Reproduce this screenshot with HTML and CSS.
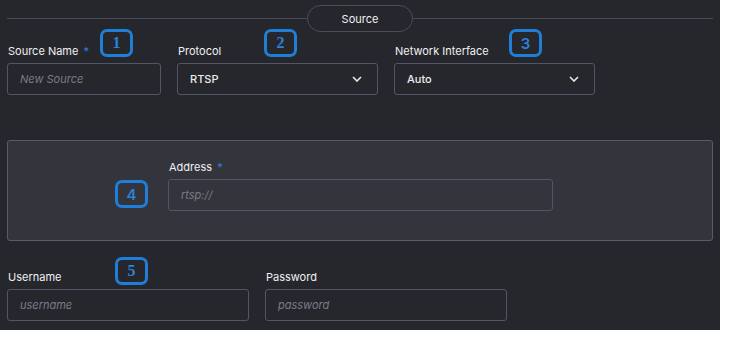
FILE: index.html
```html
<!DOCTYPE html>
<html lang="en">
<head>
    <meta charset="UTF-8">
    <meta name="viewport" content="width=device-width, initial-scale=1.0">
    <title>Source</title>
    <link rel="stylesheet" href="styles.css">
</head>
<body>

    <div class="app">

        <!-- Section header -->
        <div class="section-head">
            <div class="rule"></div>
            <div class="pill">Source</div>
            <div class="rule"></div>
        </div>

        <!-- Name / protocol / interface -->
        <div class="row row-top">
            <div class="field w-name">
                <label>Source Name <span class="req">*</span></label>
                <input type="text" placeholder="New Source">
                <span class="badge serif b1">1</span>
            </div>
            <div class="field w-proto">
                <label>Protocol</label>
                <div class="select">RTSP <svg class="chev" viewBox="0 0 10 6" width="10" height="6"><path d="M1 1l4 4 4-4" fill="none" stroke="#e8e8ec" stroke-width="1.6"/></svg></div>
                <span class="badge serif b2">2</span>
            </div>
            <div class="field w-net">
                <label>Network Interface</label>
                <div class="select">Auto <svg class="chev" viewBox="0 0 10 6" width="10" height="6"><path d="M1 1l4 4 4-4" fill="none" stroke="#e8e8ec" stroke-width="1.6"/></svg></div>
                <span class="badge b3">3</span>
            </div>
        </div>

        <!-- Address panel -->
        <div class="panel">
            <div class="field w-addr">
                <label>Address <span class="req">*</span></label>
                <input type="text" placeholder="rtsp://">
                <span class="badge b4">4</span>
            </div>
        </div>

        <!-- Credentials -->
        <div class="row row-cred">
            <div class="field w-cred">
                <label>Username</label>
                <input type="text" placeholder="username">
                <span class="badge serif b5">5</span>
            </div>
            <div class="field w-cred">
                <label>Password</label>
                <input type="password" placeholder="password">
            </div>
        </div>

    </div>

</body>
</html>
```

FILE: styles.css
```css
body { margin: 0; background: #ffffff; font-family: Inter, "Noto Sans", sans-serif; }
.app { width: 720px; height: 330px; background: #26272c; box-sizing: border-box; padding: 5px 7px 0 7px; color: #ececef; }

.section-head { display: flex; align-items: center; height: 27px; }
.rule { flex: 1; height: 1px; background: #4a4a55; }
.pill { width: 104px; height: 25px; border: 1px solid #4d4d58; border-radius: 14px; display: flex; align-items: center; justify-content: center; font-size: 11px; font-weight: 400; color: #f0f0f2; }

.row { display: flex; }
.row-top { margin-top: 12px; gap: 16px; }
.row-cred { margin-top: 29px; gap: 16px; }

.field { position: relative; display: flex; flex-direction: column; }
.field label { font-size: 11px; font-weight: 400; line-height: 14px; height: 14px; margin: 0 0 5px 1px; color: #f0f0f2; }
.req { color: #2f7fe0; margin-left: 2px; }

.w-name { width: 154px; }
.w-proto { width: 201px; }
.w-net { width: 201px; }
.w-addr { width: 385px; margin-left: 160px; }
.w-cred { width: 242px; }

input, .select { box-sizing: border-box; height: 32px; border: 1px solid #55556a; border-radius: 3px; background: transparent; font-family: Inter, "Noto Sans", sans-serif; font-size: 11px; color: #ececef; padding: 0 12px; outline: none; }
input::placeholder { color: #7b7b87; font-style: italic; }
.select { display: flex; align-items: center; justify-content: space-between; font-weight: 500; padding-right: 15px; }

.panel { margin-top: 45px; height: 101px; box-sizing: border-box; border: 1px solid #5a5a6a; border-radius: 3px; background: #34343c; padding-top: 19px; }

.badge { position: absolute; box-sizing: border-box; width: 33px; height: 28px; border: 3px solid #1f7fd8; border-radius: 7px; display: flex; align-items: center; justify-content: center; color: #2b82d6; font-size: 15px; font-weight: 600; font-family: Inter, "Noto Sans", sans-serif; }
.badge.serif { font-family: "Liberation Serif", serif; font-weight: 700; font-size: 16px; }
.b1 { left: 93px; top: -15px; }
.b2 { left: 87px; top: -15px; }
.b3 { left: 115px; top: -15px; }
.b4 { left: -53px; top: 20px; }
.b5 { left: 108px; top: -13px; }
```
